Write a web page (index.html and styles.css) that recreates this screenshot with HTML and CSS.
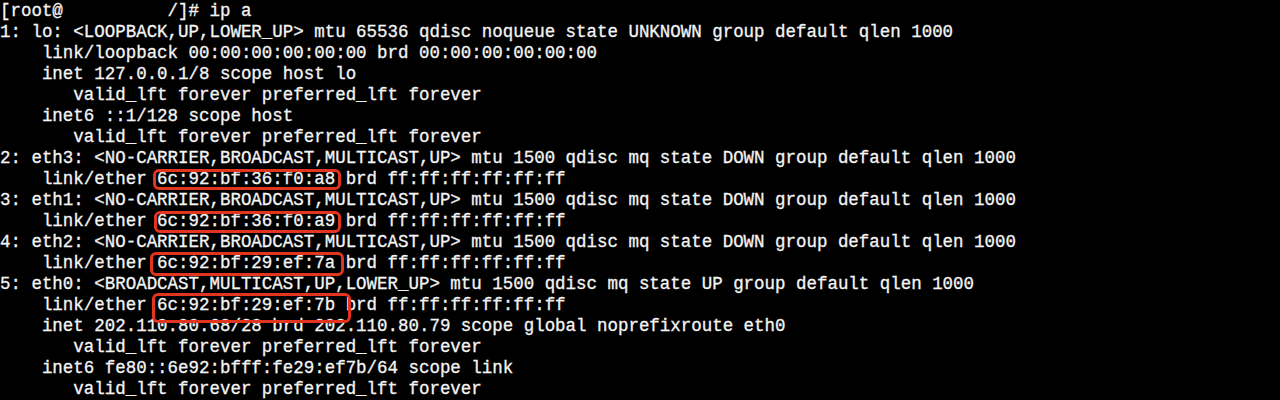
FILE: index.html
```html
<!DOCTYPE html>
<html lang="en">
<head>
<meta charset="utf-8">
<title>ip a</title>
<link rel="stylesheet" href="styles.css">
</head>
<body>
<pre class="term">[root@          /]# ip a
1: lo: &lt;LOOPBACK,UP,LOWER_UP&gt; mtu 65536 qdisc noqueue state UNKNOWN group default qlen 1000
    link/loopback 00:00:00:00:00:00 brd 00:00:00:00:00:00
    inet 127.0.0.1/8 scope host lo
       valid_lft forever preferred_lft forever
    inet6 ::1/128 scope host
       valid_lft forever preferred_lft forever
2: eth3: &lt;NO-CARRIER,BROADCAST,MULTICAST,UP&gt; mtu 1500 qdisc mq state DOWN group default qlen 1000
    link/ether <span class="mark mark-a">6c:92:bf:36:f0:a8</span> brd ff:ff:ff:ff:ff:ff
3: eth1: &lt;NO-CARRIER,BROADCAST,MULTICAST,UP&gt; mtu 1500 qdisc mq state DOWN group default qlen 1000
    link/ether <span class="mark mark-b">6c:92:bf:36:f0:a9</span> brd ff:ff:ff:ff:ff:ff
4: eth2: &lt;NO-CARRIER,BROADCAST,MULTICAST,UP&gt; mtu 1500 qdisc mq state DOWN group default qlen 1000
    link/ether <span class="mark mark-c">6c:92:bf:29:ef:7a</span> brd ff:ff:ff:ff:ff:ff
5: eth0: &lt;BROADCAST,MULTICAST,UP,LOWER_UP&gt; mtu 1500 qdisc mq state UP group default qlen 1000
    link/ether <span class="mark mark-d">6c:92:bf:29:ef:7b</span> brd ff:ff:ff:ff:ff:ff
    inet 202.110.80.68/28 brd 202.110.80.79 scope global noprefixroute eth0
       valid_lft forever preferred_lft forever
    inet6 fe80::6e92:bfff:fe29:ef7b/64 scope link
       valid_lft forever preferred_lft forever</pre>
</body>
</html>
```

FILE: styles.css
```css
html, body {
  margin: 0;
  padding: 0;
  background: #000;
  height: 100%;
  overflow: hidden;
}

.term {
  margin: 0;
  padding: 1px 0 0 0;
  color: #f4f4f4;
  font-family: "Liberation Mono", "DejaVu Sans Mono", monospace;
  font-size: 17.47px;
  line-height: 21px;
  white-space: pre;
  -webkit-text-stroke: 0.3px #f4f4f4;
}

.mark {
  position: relative;
}

.mark::after {
  content: "";
  position: absolute;
  border: 3px solid #e3341f;
  border-radius: 6px;
  pointer-events: none;
}

.mark-a::after {
  left: -4px;
  right: -6px;
  top: 0px;
  bottom: -1px;
}

.mark-b::after {
  left: -3px;
  right: -6px;
  top: 0px;
  bottom: -2px;
}

.mark-c::after {
  left: -7px;
  right: -9px;
  top: -1px;
  bottom: -3px;
}

.mark-d::after {
  left: -5px;
  right: -16px;
  top: -2px;
  bottom: -8px;
}
```
